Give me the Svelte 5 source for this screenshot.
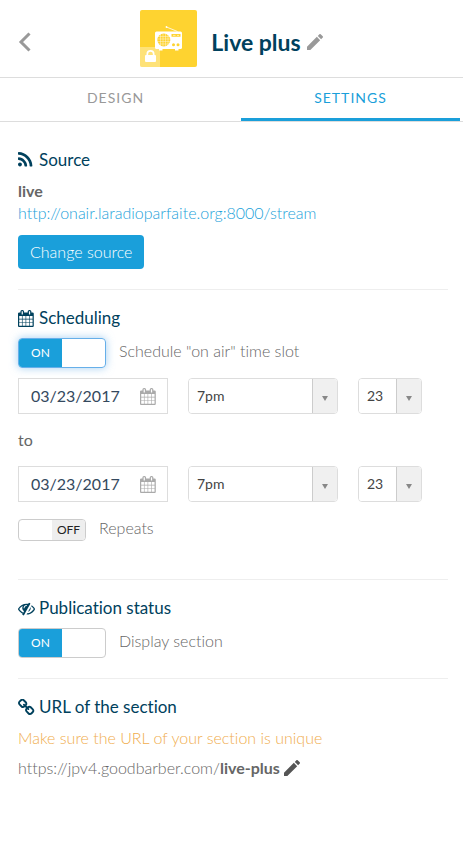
<script lang="ts">
  const icons = {
    rss: {
      box: '192 128 1664 1664',
      path: 'M576 1344q0 80-56 136t-136 56-136-56-56-136 56-136 136-56 136 56 56 136zm512 123q2 28-17 48-18 21-47 21h-135q-25 0-43-16.5t-20-41.5q-22-229-184.5-391.5t-391.5-184.5q-25-2-41.5-20t-16.5-43v-135q0-29 21-47 17-17 43-17h5q160 13 306 80.5t259 181.5q114 113 181.5 259t80.5 306zm512 2q2 27-18 47-18 20-46 20h-143q-26 0-44.5-17.5t-19.5-42.5q-12-215-101-408.5t-231.5-336-336-231.5-408.5-102q-25-1-42.5-19.5t-17.5-43.5v-143q0-28 20-46 18-18 44-18h3q262 13 501.5 120t425.5 294q187 186 294 425.5t120 501.5z'
    },
    calendar: {
      box: '64 0 1792 1792',
      path: 'M192 1664h288v-288h-288v288zm352 0h320v-288h-320v288zm-352-352h288v-320h-288v320zm352 0h320v-320h-320v320zm-352-384h288v-288h-288v288zm736 736h320v-288h-320v288zm-384-736h320v-288h-320v288zm768 736h288v-288h-288v288zm-384-352h320v-320h-320v320zm-352-864v-288q0-13-9.5-22.5t-22.5-9.5h-64q-13 0-22.5 9.5t-9.5 22.5v288q0 13 9.5 22.5t22.5 9.5h64q13 0 22.5-9.5t9.5-22.5zm736 864h288v-320h-288v320zm-384-384h320v-288h-320v288zm384 0h288v-288h-288v288zm32-480v-288q0-13-9.5-22.5t-22.5-9.5h-64q-13 0-22.5 9.5t-9.5 22.5v288q0 13 9.5 22.5t22.5 9.5h64q13 0 22.5-9.5t9.5-22.5zm384-64v1280q0 52-38 90t-90 38h-1408q-52 0-90-38t-38-90v-1280q0-52 38-90t90-38h128v-96q0-66 47-113t113-47h64q66 0 113 47t47 113v96h384v-96q0-66 47-113t113-47h64q66 0 113 47t47 113v96h128q52 0 90 38t38 90z'
    },
    eye: {
      box: '0 0 1792 1792',
      path: 'M555 1335l78-141q-87-63-136-159t-49-203q0-121 61-225-229 117-381 353 167 258 427 375zm389-759q0-20-14-34t-34-14q-125 0-214.5 89.5t-89.5 214.5q0 20 14 34t34 14 34-14 14-34q0-86 61-147t147-61q20 0 34-14t14-34zm363-191q0 7-1 9-106 189-316 567t-315 566l-49 89q-10 16-28 16-12 0-134-70-16-10-16-28 0-12 44-87-143-65-263.5-173t-208.5-245q-20-31-20-69t20-69q153-235 380-371t496-136q89 0 180 17l54-97q10-16 28-16 5 0 18 6t31 15.5 33 18.5 31.5 18.5 19.5 11.5q16 10 16 27zm37 447q0 139-79 253.5t-209 164.5l280-502q8 45 8 84zm448 128q0 35-20 69-39 64-109 145-150 172-347.5 267t-419.5 95l74-132q212-18 392.5-137t301.5-307q-115-179-282-294l63-112q95 64 182.5 153t144.5 184q20 34 20 69z'
    },
    link: {
      box: '80 46 1700 1700',
      path: 'M1520 1216q0-40-28-68l-208-208q-28-28-68-28-42 0-72 32 3 3 19 18.5t21.5 21.5 15 19 13 25.5 3.5 27.5q0 40-28 68t-68 28q-15 0-27.5-3.5t-25.5-13-19-15-21.5-21.5-18.5-19q-33 31-33 73 0 40 28 68l206 207q27 27 68 27 40 0 68-26l147-146q28-28 28-67zm-703-705q0-40-28-68l-206-207q-28-28-68-28-39 0-68 27l-147 146q-28 28-28 67 0 40 28 68l208 208q27 27 68 27 42 0 72-31-3-3-19-18.5t-21.5-21.5-15-19-13-25.5-3.5-27.5q0-40 28-68t68-28q15 0 27.5 3.5t25.5 13 19 15 21.5 21.5 18.5 19q33-31 33-73zm895 705q0 120-85 203l-147 146q-83 83-203 83-121 0-204-85l-206-207q-83-83-83-203 0-123 88-209l-88-88q-86 88-208 88-120 0-204-84l-208-208q-84-84-84-204t85-203l147-146q83-83 203-83 121 0 204 85l206 207q83 83 83 203 0 123-88 209l88 88q86-88 208-88 120 0 204 84l208 208q84 84 84 204z'
    }
  };

  const hours = ['12am', ...Array.from({ length: 11 }, (_, i) => `${i + 1}am`), '12pm', ...Array.from({ length: 11 }, (_, i) => `${i + 1}pm`)];
  const minutes = Array.from({ length: 60 }, (_, i) => String(i).padStart(2, '0'));

  let slots = $state([
    { id: 'start', date: '03/23/2017', hour: '7pm', minute: '23' },
    { id: 'end', date: '03/23/2017', hour: '7pm', minute: '23' }
  ]);
  let scheduled = $state(true);
  let repeats = $state(false);
  let displayed = $state(true);
  let tab = $state('settings');
</script>

{#snippet icon(glyph)}
  <svg class="icon" viewBox={glyph.box} aria-hidden="true"><path d={glyph.path} /></svg>
{/snippet}

{#snippet pencil()}
  <svg class="pencil" viewBox="3 3 18 18" aria-hidden="true">
    <path d="M3 17.25V21h3.75L17.81 9.94l-3.75-3.75L3 17.25zM20.71 7.04a1 1 0 0 0 0-1.41l-2.34-2.34a1 1 0 0 0-1.41 0l-1.83 1.83 3.75 3.75 1.83-1.83z" />
  </svg>
{/snippet}

{#snippet slotRow(slot)}
  <div class="slot">
    <div class="date">
      <input type="text" aria-label="{slot.id} date" bind:value={slot.date} />
      <button type="button" aria-label="Pick {slot.id} date">{@render icon(icons.calendar)}</button>
    </div>
    <div class="select hour">
      <select aria-label="{slot.id} hour" bind:value={slot.hour}>
        {#each hours as hour}<option>{hour}</option>{/each}
      </select>
      <span class="arrow"></span>
    </div>
    <div class="select minute">
      <select aria-label="{slot.id} minute" bind:value={slot.minute}>
        {#each minutes as minute}<option>{minute}</option>{/each}
      </select>
      <span class="arrow"></span>
    </div>
  </div>
{/snippet}

<div class="panel">
  <header>
    <button type="button" class="back" aria-label="Back">
      <svg viewBox="0 0 13 20" aria-hidden="true"><path d="M11.500 1.500L3 10l8.500 8.500" /></svg>
    </button>
    <div class="title">
      <div class="thumb">
        <svg viewBox="0 0 57 57" aria-hidden="true">
          <path d="M26.500 17l11 4.500" stroke="#fff" stroke-width=".8" />
          <circle cx="26.500" cy="17" r=".9" fill="#fff" />
          <rect x="15" y="21.500" width="27" height="17.500" rx="1.500" fill="#fff" />
          <path d="M19 38.500h3.500v2H19zM35 38.500h3.500v2H35z" fill="#fff" />
          <circle cx="23.800" cy="30" r="6.500" fill="#fed330" />
          <path d="M18 26.500h12M17 29h14M17 31.500h14M18 34h12M20.500 24v12M23 23.500v13M25.500 23.500v13M28 24v12" stroke="#fff" stroke-width=".5" opacity=".8" />
          <path d="M31.500 24h9v2.800h-9z" fill="#fed330" />
          <path d="M33 25.400h2.500M37 25.400h2" stroke="#fff" stroke-width=".6" />
          <circle cx="33.500" cy="34.700" r="1.500" fill="#fed330" />
          <circle cx="38" cy="34.700" r="1.500" fill="#fed330" />
          <path d="M0 37h20v20H0z" fill="#fff" opacity=".35" />
          <path d="M7.300 46v-2a3.200 3.200 0 0 1 6.400 0v2" fill="none" stroke="#fff" stroke-width="1.700" />
          <rect x="5" y="45" width="11" height="7" rx="1" fill="#fff" />
        </svg>
      </div>
      <h1>Live plus</h1>
      <button type="button" class="edit" aria-label="Edit title">{@render pencil()}</button>
    </div>
  </header>

  <nav>
    <button type="button" class:active={tab === 'design'} onclick={() => (tab = 'design')}>DESIGN</button>
    <button type="button" class:active={tab === 'settings'} onclick={() => (tab = 'settings')}>SETTINGS</button>
  </nav>

  <main>
    <section class="source">
      <h2>{@render icon(icons.rss)}Source</h2>
      <strong>live</strong>
      <a href="http://onair.laradioparfaite.org:8000/stream">http://onair.laradioparfaite.org:8000/stream</a>
      <button type="button" class="primary">Change source</button>
    </section>

    <section class="scheduling">
      <h2>{@render icon(icons.calendar)}Scheduling</h2>
      <label class="toggle">
        <input type="checkbox" bind:checked={scheduled} />
        <span class="switch focused" class:on={scheduled}><span>{scheduled ? 'ON' : 'OFF'}</span></span>
        <span class="caption">Schedule "on air" time slot</span>
      </label>
      {@render slotRow(slots[0])}
      <p class="to">to</p>
      {@render slotRow(slots[1])}
      <label class="toggle repeats">
        <input type="checkbox" bind:checked={repeats} />
        <span class="switch small" class:on={repeats}><span>{repeats ? 'ON' : 'OFF'}</span></span>
        <span class="caption">Repeats</span>
      </label>
    </section>

    <section>
      <h2>{@render icon(icons.eye)}Publication status</h2>
      <label class="toggle">
        <input type="checkbox" bind:checked={displayed} />
        <span class="switch" class:on={displayed}><span>{displayed ? 'ON' : 'OFF'}</span></span>
        <span class="caption">Display section</span>
      </label>
    </section>

    <section>
      <h2>{@render icon(icons.link)}URL of the section</h2>
      <p class="warning">Make sure the URL of your section is unique</p>
      <p class="url">
        <span>https://jpv4.goodbarber.com/<b>live-plus</b></span>
        <button type="button" class="edit" aria-label="Edit URL">{@render pencil()}</button>
      </p>
    </section>
  </main>
</div>

<style>
  :global(body) {
    margin: 0;
    background: #fff;
  }

  .panel {
    font-family: Lato, sans-serif;
    font-size: 16px;
    font-weight: 300;
    font-variant-ligatures: none;
    line-height: 22px;
    color: #666;
  }

  button,
  input,
  select {
    font: inherit;
    margin: 0;
  }

  button {
    padding: 0;
    border: 0;
    background: none;
    cursor: pointer;
  }

  h1,
  h2,
  p {
    margin: 0;
  }

  header {
    display: grid;
    grid-template-columns: 1fr auto 1fr;
    align-items: center;
    padding: 10px 18px;
    border-bottom: 1px solid #ddd;
  }

  .back {
    justify-self: start;
    display: flex;
    margin-top: 6px;
  }

  .back svg {
    width: 13px;
    height: 20px;
    fill: none;
    stroke: #999;
    stroke-width: 3;
  }

  .title {
    display: flex;
    align-items: center;
  }

  .thumb {
    width: 57px;
    height: 57px;
    margin-right: 14px;
    border-radius: 2px;
    background: #fed330;
    overflow: hidden;
  }

  .thumb svg {
    display: block;
  }

  h1 {
    margin-top: 6px;
    font-size: 23px;
    line-height: 30px;
    font-weight: 700;
    color: #00415d;
  }

  .edit {
    display: flex;
    margin-left: 6px;
    color: #555;
  }

  .title .edit {
    margin-top: 6px;
    color: #999;
  }

  .pencil {
    width: 16px;
    height: 16px;
    fill: currentColor;
  }

  nav {
    display: grid;
    grid-template-columns: 1fr 1fr;
    gap: 16px;
    padding: 0 3px 0 6px;
    border-bottom: 1px solid #ddd;
  }

  nav button {
    padding: 9px 0;
    border-bottom: 3px solid transparent;
    font-size: 14px;
    font-weight: 400;
    letter-spacing: 1px;
    color: #999;
  }

  nav .active {
    border-color: #1a9fda;
    color: #1a9fda;
  }

  main {
    padding: 10px 15px 0 18px;
  }

  section {
    padding: 17px 0 20px;
    border-bottom: 1px solid #eee;
  }

  section:last-child {
    border: 0;
  }

  h2 {
    display: flex;
    align-items: center;
    gap: 4px;
    margin-bottom: 9px;
    font-size: 17px;
    font-weight: 400;
    color: #00415d;
  }

  .icon {
    width: 17px;
    height: 17px;
    fill: currentColor;
  }

  .source {
    display: flex;
    flex-direction: column;
    align-items: flex-start;
  }

  strong,
  b {
    font-weight: 700;
  }

  a {
    color: #1a9fda;
    text-decoration: none;
  }

  .primary {
    margin-top: 11px;
    padding: 6px 12px;
    border-radius: 4px;
    background: #1a9fda;
    color: #fff;
  }

  .toggle {
    position: relative;
    display: flex;
    align-items: center;
    gap: 13px;
  }

  .toggle input {
    position: absolute;
    opacity: 0;
  }

  .caption {
    margin: -2px 0 2px;
  }

  .switch {
    box-sizing: border-box;
    display: flex;
    justify-content: flex-end;
    width: 88px;
    height: 30px;
    border: 1px solid #ccc;
    border-radius: 4px;
    overflow: hidden;
  }

  .switch span {
    display: flex;
    align-items: center;
    justify-content: center;
    width: 50%;
    background: #eee;
    color: #222;
    font-size: 12px;
    font-weight: 400;
  }

  .switch.on {
    justify-content: flex-start;
  }

  .on span {
    background: #1a9fda;
    color: #fff;
  }

  .focused {
    border-color: #66afe9;
    box-shadow: 0 0 8px rgba(102, 175, 233, 0.6);
  }

  .small {
    width: 68px;
    height: 22px;
  }

  .repeats {
    margin: 17px 0 18px;
  }

  .slot {
    display: flex;
    gap: 20px;
  }

  .scheduling .toggle + .slot {
    margin-top: 10px;
  }

  .date,
  .select {
    box-sizing: border-box;
    height: 36px;
    border: 1px solid #ddd;
  }

  .date {
    display: flex;
    align-items: center;
    width: 150px;
    padding: 0 10px 0 12px;
  }

  .date input {
    flex: 1;
    min-width: 0;
    padding: 0;
    border: 0;
    outline: 0;
    font-weight: 400;
    color: #34495e;
  }

  .date button {
    display: flex;
    color: #aaa;
  }

  .select {
    position: relative;
    border-radius: 4px;
    overflow: hidden;
  }

  .hour {
    width: 150px;
  }

  .minute {
    width: 64px;
  }

  select {
    appearance: none;
    width: 100%;
    height: 100%;
    padding: 0 28px 0 8px;
    border: 0;
    background: #fff;
    font-size: 14px;
    font-weight: 400;
    color: #444;
  }

  .arrow {
    position: absolute;
    top: 0;
    right: 0;
    bottom: 0;
    display: flex;
    align-items: center;
    justify-content: center;
    width: 24px;
    border-left: 1px solid #ccc;
    background: #f0f0f0;
    pointer-events: none;
  }

  .arrow::after {
    content: '';
    margin-top: 4px;
    border: 3px solid transparent;
    border-top: 5px solid #888;
    border-bottom: 0;
  }

  .to {
    margin: 15px 0;
    font-weight: 400;
  }

  .url {
    display: flex;
    align-items: center;
    margin-top: 8px;
  }

  .url .edit {
    margin-left: 4px;
  }

  .warning {
    color: #f0ad4e;
  }
</style>
